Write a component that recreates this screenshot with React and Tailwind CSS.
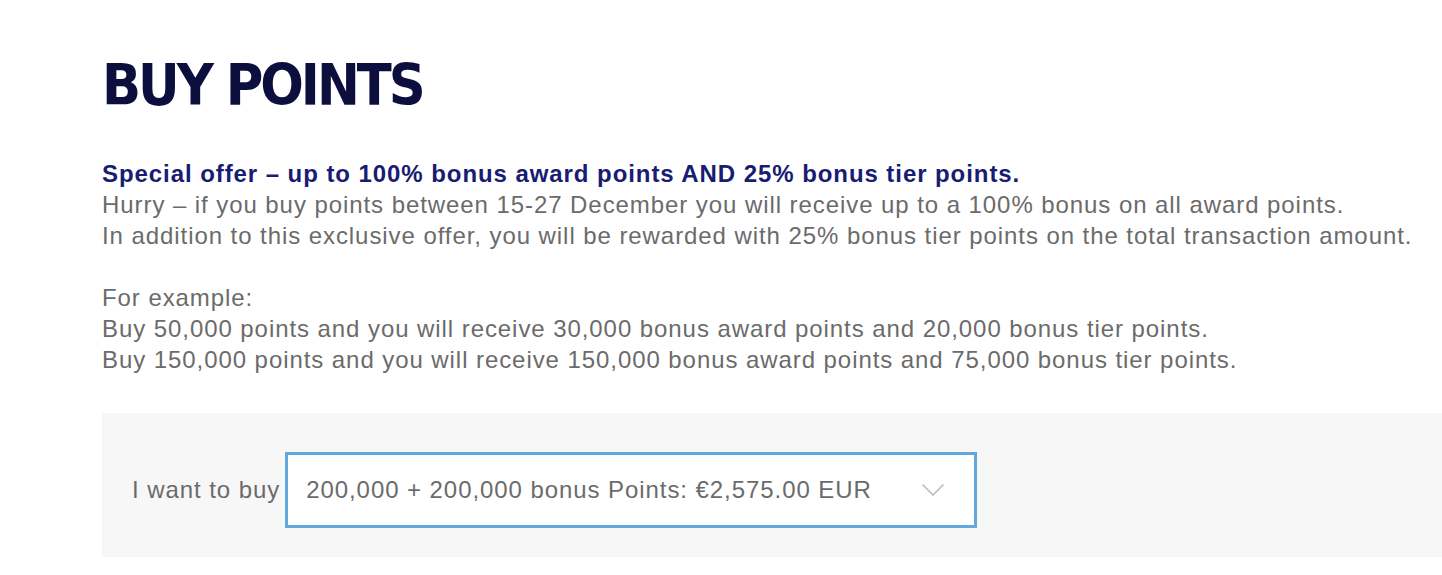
const intro = [
  'Hurry – if you buy points between 15-27 December you will receive up to a 100% bonus on all award points.',
  'In addition to this exclusive offer, you will be rewarded with 25% bonus tier points on the total transaction amount.',
]

const examples = [
  'Buy 50,000 points and you will receive 30,000 bonus award points and 20,000 bonus tier points.',
  'Buy 150,000 points and you will receive 150,000 bonus award points and 75,000 bonus tier points.',
]

function Chevron() {
  return (
    <svg width="24" height="14" viewBox="0 0 24 14" fill="none" className="shrink-0">
      <polyline points="1.5,1.5 12,12 22.5,1.5" stroke="#bdbdbd" strokeWidth="1.6" />
    </svg>
  )
}

export default function App() {
  return (
    <div className="min-h-screen bg-white pl-[102px] pt-[52px] font-['Liberation_Sans',Arial,sans-serif] tracking-[0.93px]">
      {/* Heading */}
      <h1 className="text-[57px] leading-[66px] font-bold text-[#0c0f3d] tracking-[-3px] font-['DejaVu_Sans_Condensed','Liberation_Sans_Narrow',sans-serif]">
        BUY POINTS
      </h1>

      {/* Offer text */}
      <div className="mt-[40px] text-[24px] leading-[31px] text-[#6b6b6b]">
        <p className="font-bold text-[#181c72]">
          Special offer – up to 100% bonus award points AND 25% bonus tier points.
        </p>
        {intro.map((line) => (
          <p key={line}>{line}</p>
        ))}
        <p className="mt-[31px]">For example:</p>
        {examples.map((line) => (
          <p key={line}>{line}</p>
        ))}
      </div>

      {/* Buy box */}
      <div className="mt-[38px] h-[144px] bg-[#f7f7f8] pt-[39px] pl-[30px]">
        <div className="flex items-center">
          <label className="text-[24px] text-[#6b6b6b] mr-[5px]">I want to buy</label>
          <div className="box-border w-[692px] h-[76px] bg-white border-[3px] border-[#62a8dc] flex items-center pl-[18px] pr-[29px]">
            <span className="flex-1 text-[24px] text-[#6b6b6b]">200,000 + 200,000 bonus Points: €2,575.00 EUR</span>
            <Chevron />
          </div>
        </div>
      </div>
    </div>
  )
}
